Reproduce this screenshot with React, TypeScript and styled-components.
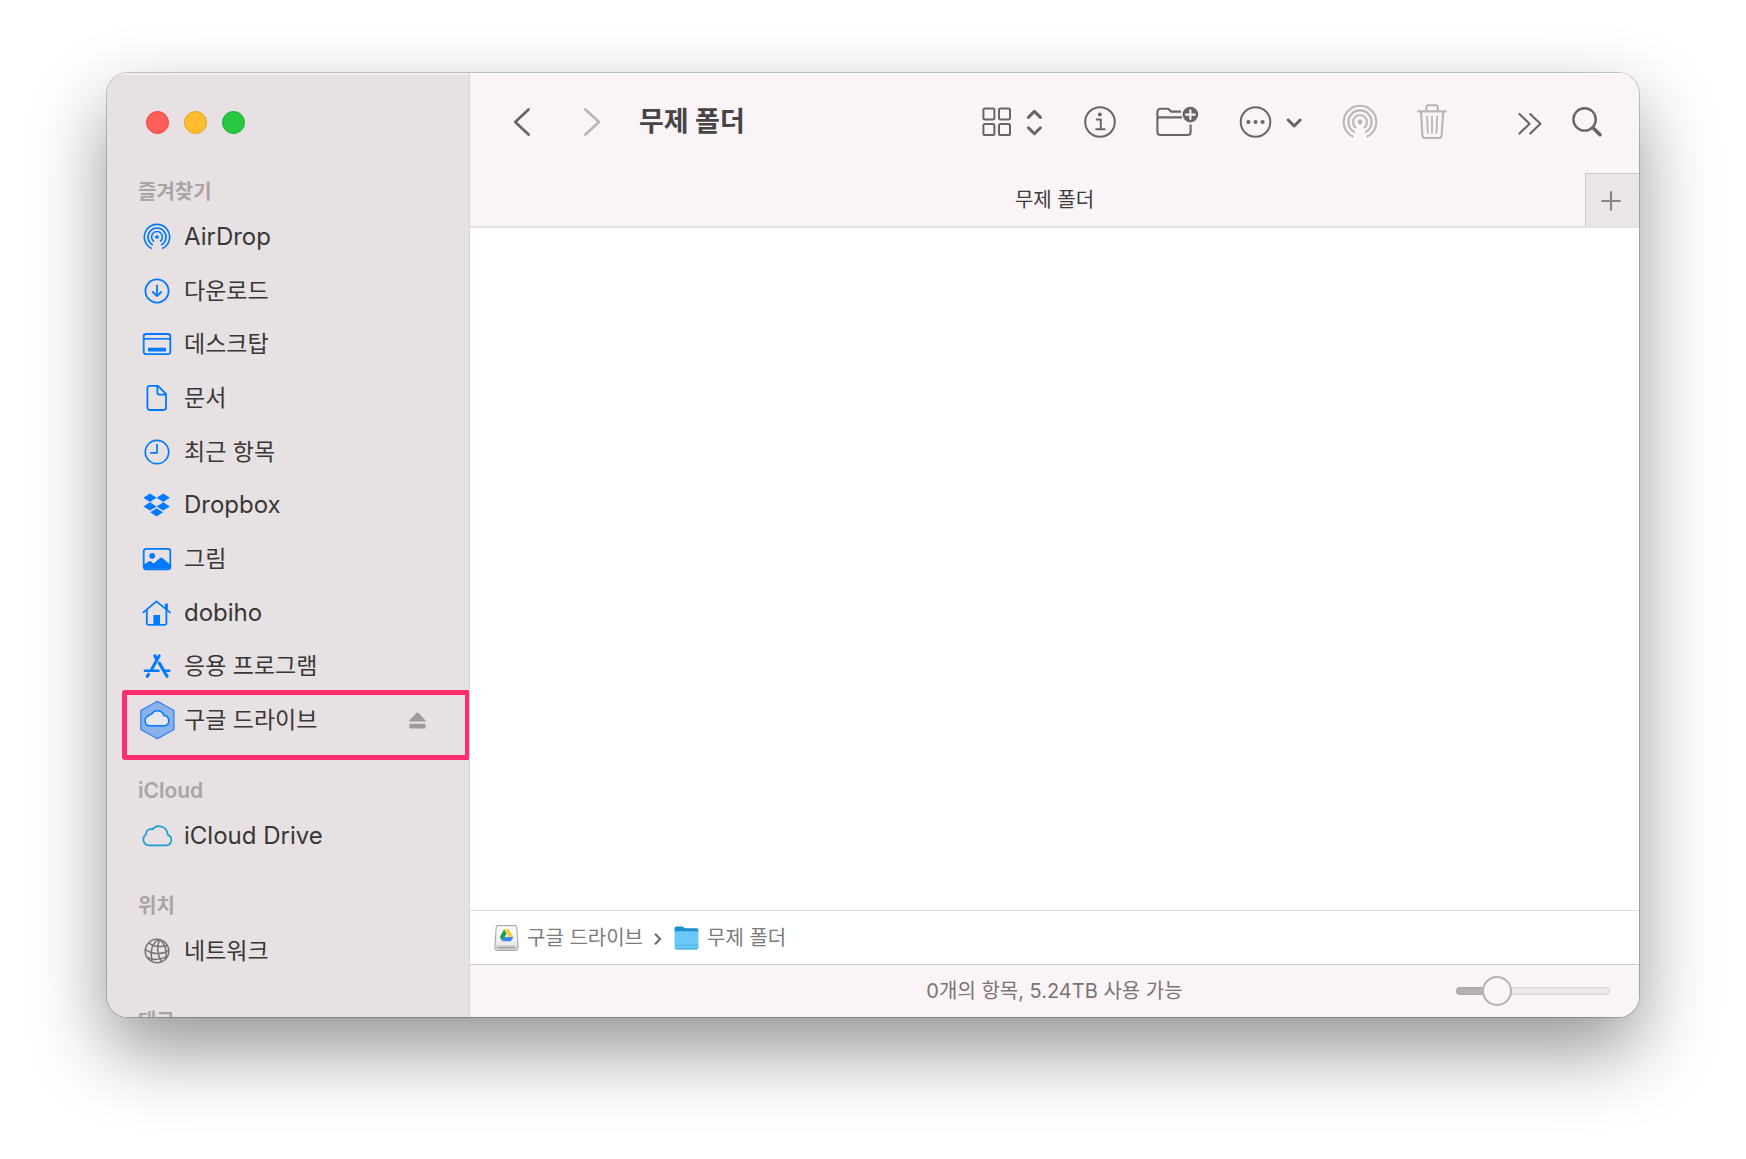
import React, { useState } from "react";
import styled, { createGlobalStyle } from "styled-components";

const BLUE = "#007aff";
const INK = "#6b6466";
const FAINT = "#bcb5b7";

const GlobalStyle = createGlobalStyle`
  *, *::before, *::after { box-sizing: border-box; }
  body {
    margin: 0;
    background: #fff;
    font-family: Inter, "Noto Sans CJK KR", sans-serif;
  }
  button { font: inherit; color: inherit; background: none; border: 0; padding: 0; }
  svg { display: block; flex: none; }
`;

const Page = styled.div`
  min-height: 100vh;
  padding: 73px 107px 142px;
`;

const Window = styled.div`
  display: flex;
  height: calc(100vh - 215px);
  min-height: 480px;
  border-radius: 21px;
  overflow: hidden;
  background: #fff;
  box-shadow: 0 0 0 1px rgba(0, 0, 0, 0.2), 0 33px 76px rgba(0, 0, 0, 0.42);
`;

const Sidebar = styled.aside`
  flex: 0 0 363px;
  overflow: hidden;
  background: #e7e1e3;
  border-right: 1px solid #d9d3d5;
  box-shadow: inset 0 2px 0 #f1edee;
`;

const Lights = styled.div`
  display: flex;
  gap: 15px;
  padding: 38px 0 40px 39px;
`;

const Light = styled.button<{ $fill: string; $edge: string }>`
  width: 23px;
  height: 23px;
  border-radius: 50%;
  background: ${(p) => p.$fill};
  border: 1px solid ${(p) => p.$edge};
`;

const Group = styled.section`
  margin-bottom: 26px;
`;

const GroupTitle = styled.h2<{ $latin: boolean }>`
  margin: 0;
  padding-left: 31px;
  font-size: ${(p) => (p.$latin ? 21 : 20)}px;
  line-height: 36px;
  font-weight: 600;
  color: #aaa3a5;
`;

const List = styled.ul<{ $height?: number }>`
  display: flex;
  flex-direction: column;
  height: ${(p) => (p.$height ? p.$height + "px" : "auto")};
  margin: 0;
  padding: 0;
  list-style: none;
`;

const Item = styled.li`
  position: relative;
  display: flex;
  flex: 1 0 auto;
  min-height: 53px;
  align-items: center;
  padding: 0 43px 0 32px;
`;

const ItemLink = styled.a<{ $latin: boolean }>`
  display: flex;
  flex: 1;
  align-items: center;
  gap: 9px;
  font-size: ${(p) => (p.$latin ? 24 : 23)}px;
  line-height: 32px;
  color: #383637;
  text-decoration: none;
`;

const IconSlot = styled.span`
  display: grid;
  place-items: center;
  width: 36px;
  height: 40px;
`;

const Marker = styled.span`
  position: absolute;
  top: -3px;
  right: -1px;
  bottom: -13px;
  left: 15px;
  border: 5px solid #ff2d6d;
  border-radius: 3px;
  pointer-events: none;
`;

const Main = styled.main`
  display: flex;
  flex: 1;
  min-width: 0;
  flex-direction: column;
`;

const Toolbar = styled.header`
  display: flex;
  flex: 0 0 100px;
  align-items: center;
  padding: 0 37px 2px 38px;
  background: #faf4f6;
  box-shadow: inset 0 2px 0 #fffcfd;
  color: ${INK};
`;

const NavButtons = styled.div`
  display: flex;
  gap: 42px;
`;

const Title = styled.h1`
  margin: 0 auto 0 33px;
  font-size: 27px;
  line-height: 38px;
  font-weight: 700;
  color: #484446;
`;

const Tools = styled.div`
  display: flex;
  gap: 40px;
  margin-right: 71px;
`;

const EndTools = styled.div`
  display: flex;
  gap: 30px;
`;

const ToolButton = styled.button<{ $width: number }>`
  display: flex;
  align-items: center;
  justify-content: space-between;
  width: ${(p) => p.$width}px;
  height: 36px;
`;

const TabBar = styled.div`
  display: grid;
  flex: 0 0 55px;
  grid-template-columns: 54px 1fr 54px;
  background: #faf4f6;
  border-bottom: 2px solid #e6e1e3;
`;

const Tab = styled.button`
  grid-column: 2;
  font-size: 20px;
  line-height: 28px;
  color: #3f3b3d;
`;

const NewTab = styled.button`
  display: grid;
  place-items: center;
  padding: 2px 3px 0 0;
  background: #ece6e8;
  border: solid #cfc9cb;
  border-width: 1px 0 0 1px;
`;

const Files = styled.div`
  flex: 1;
  background: #fff;
`;

const PathBar = styled.nav`
  display: flex;
  flex: 0 0 54px;
  align-items: center;
  gap: 11px;
  padding: 0 24px;
  border-top: 1px solid #e0e0e0;
`;

const PathLink = styled.a`
  display: flex;
  align-items: center;
  gap: 8px;
  font-size: 20px;
  line-height: 28px;
  color: #7b7b7b;
  text-decoration: none;
`;

const StatusBar = styled.footer`
  display: grid;
  flex: 0 0 53px;
  grid-template-columns: 1fr auto 1fr;
  align-items: center;
  padding: 0 29px 1px;
  background: #faf4f6;
  border-top: 1px solid #cfcacc;
`;

const StatusText = styled.p`
  grid-column: 2;
  margin: 0;
  font-size: 20px;
  line-height: 28px;
  color: #7a7375;
`;

const Slider = styled.input<{ $fill: number }>`
  appearance: none;
  justify-self: end;
  width: 154px;
  height: 30px;
  margin: 0;
  background: none;

  &::-webkit-slider-runnable-track {
    height: 8px;
    border-radius: 4px;
    box-shadow: inset 0 0 0 1px rgba(120, 100, 108, 0.14);
    background: linear-gradient(
      to right,
      #b7b0b2 ${(p) => p.$fill}%,
      #ece6e8 ${(p) => p.$fill}%
    );
  }

  &::-webkit-slider-thumb {
    appearance: none;
    width: 30px;
    height: 30px;
    margin-top: -11px;
    border: 2px solid #b7b0b2;
    border-radius: 50%;
    background: #faf4f6;
  }
`;

const arc = (r: number, deg: number) => {
  const a = (deg * Math.PI) / 180;
  const dx = r * Math.sin(a);
  const dy = 18 + r * Math.cos(a);
  return `M${18 - dx} ${dy}A${r} ${r} 0 1 1 ${18 + dx} ${dy}`;
};

const AirDropIcon = ({ size, color, weight }: { size: number; color: string; weight: number }) => (
  <svg width={size} height={size} viewBox="0 0 36 36" fill="none" stroke={color} strokeWidth={weight} strokeLinecap="round">
    <path d={arc(16.3, 27)} />
    <path d={arc(11.6, 31)} />
    <path d={arc(7, 40)} />
    <circle cx="18" cy="18" r="2.4" fill={color} stroke="none" />
  </svg>
);

const DownloadIcon = () => (
  <svg width="28" height="28" viewBox="0 0 28 28" fill="none" stroke={BLUE} strokeWidth="1.8" strokeLinecap="round" strokeLinejoin="round">
    <circle cx="14" cy="14" r="11.6" />
    <path d="M14 8.4V19M9.8 15L14 19.2L18.2 15" />
  </svg>
);

const DesktopIcon = () => (
  <svg width="30" height="24" viewBox="0 0 30 24" fill="none" stroke={BLUE} strokeWidth="1.8">
    <rect x="1.7" y="2" width="26.6" height="20.2" rx="2.4" />
    <path d="M2 6.8H28" strokeWidth="1.6" />
    <rect x="6" y="15.8" width="18" height="3.8" rx="0.8" fill={BLUE} stroke="none" />
  </svg>
);

const DocumentIcon = () => (
  <svg width="24" height="28" viewBox="0 0 24 28" fill="none" stroke={BLUE} strokeWidth="1.8" strokeLinejoin="round">
    <path d="M4.6 1.8H13L21 10V23.6A2.4 2.4 0 0 1 18.6 26H4.8A2.4 2.4 0 0 1 2.4 23.6V4A2.2 2.2 0 0 1 4.6 1.8Z" />
    <path d="M12.4 2.2V8.8A1.8 1.8 0 0 0 14.2 10.6H20.8" />
  </svg>
);

const ClockIcon = () => (
  <svg width="28" height="28" viewBox="0 0 28 28" fill="none" stroke={BLUE} strokeWidth="1.7" strokeLinecap="round" strokeLinejoin="round">
    <circle cx="14" cy="14" r="11.7" />
    <path d="M14 6.6V14.8H7.6" />
  </svg>
);

const DropboxIcon = () => (
  <svg width="28" height="24" viewBox="0 0 28 24" fill={BLUE}>
    <path d="M7 0.6L13.6 4.8L7 9L0.4 4.8ZM20.2 0.6L26.8 4.8L20.2 9L13.6 4.8ZM7 9.2L13.6 13.4L7 17.6L0.4 13.4ZM20.2 9.2L26.8 13.4L20.2 17.6L13.6 13.4ZM13.6 15.2L20 19.2L13.6 23.4L7.2 19.2Z" />
  </svg>
);

const PictureIcon = () => (
  <svg width="30" height="24" viewBox="0 0 30 24">
    <rect x="1.7" y="1.9" width="26.6" height="20.4" rx="2.4" fill="none" stroke={BLUE} strokeWidth="1.8" />
    <circle cx="10.2" cy="8.8" r="2.9" fill={BLUE} />
    <path d="M2 17.6L7.2 14.2Q8 13.7 8.8 14.3L11.6 16.4L18.4 10.8Q19.3 10.1 20.2 10.8L28 17.6V21.8H2Z" fill={BLUE} />
  </svg>
);

const HomeIcon = () => (
  <svg width="30" height="28" viewBox="0 0 30 28" fill="none" stroke={BLUE} strokeWidth="1.8" strokeLinecap="round" strokeLinejoin="round">
    <path d="M1.4 13.4L14.4 2.4L28 13.4" />
    <path d="M4.8 11V24A1.8 1.8 0 0 0 6.6 25.8H22.6A1.8 1.8 0 0 0 24.4 24V11" />
    <path d="M24.4 4.6V10" strokeWidth="3" strokeLinecap="butt" />
    <rect x="11.4" y="16" width="6.6" height="9.6" fill={BLUE} stroke="none" />
  </svg>
);

const AppsIcon = () => (
  <svg width="28" height="28" viewBox="0 0 28 28" fill="none" stroke={BLUE} strokeLinecap="round">
    <path d="M16.2 3.8L8.6 17.4M5.6 22.2L4.2 24.4" strokeWidth="3" />
    <path d="M11.8 3.8L13.4 6.6M16.4 11.2L24 24.2" strokeWidth="3.2" />
    <path d="M1.8 18.8H15.6M22 18.8H26.2" strokeWidth="2.4" />
  </svg>
);

const GoogleDriveIcon = () => (
  <svg width="36" height="40" viewBox="0 0 36 40" strokeLinejoin="round">
    <path d="M18.4 1.2L35 10.6V29.4L18.4 38.8L1.8 29.4V10.6Z" fill="#8ab1ea" stroke="#2a83f2" strokeWidth="1.2" />
    <path d="M10.6 25.8A5 5 0 0 1 8.8 16.4A4.4 4.4 0 0 1 12.6 14.2A6.6 6.6 0 0 1 24.8 15.6A5.2 5.2 0 0 1 26 25.8Z" fill="#e9e7ee" stroke={BLUE} strokeWidth="1.5" />
  </svg>
);

const CloudIcon = () => (
  <svg width="32" height="24" viewBox="0 0 32 24" fill="none" stroke="#1b9fd8" strokeWidth="1.7" strokeLinejoin="round">
    <path d="M7.4 21.4A6 6 0 0 1 5.2 10.4A4.6 4.6 0 0 1 11.4 5.4A8.6 8.6 0 0 1 26.6 10.6A5.6 5.6 0 0 1 25.2 21.4Z" />
  </svg>
);

const GlobeIcon = () => (
  <svg width="28" height="28" viewBox="0 0 28 28" fill="none" stroke="#777274" strokeWidth="1.5">
    <circle cx="14" cy="14" r="11.8" />
    <path d="M16.6 2.6C9 5 6.8 14 9.2 24.6M16.6 2.6C13.6 9 14 18 18.6 24.8M16.6 2.6C21.6 6 24.2 12 23 21.4" />
    <path d="M5.6 5.8C11 9.6 18 10.2 24.4 8.6M2.4 12.4C9 17.6 18.6 17.8 25.6 13.6M4.2 20.6C10 23 18 22.6 24 19.6" />
  </svg>
);

const EjectIcon = () => (
  <svg width="17" height="17" viewBox="0 0 17 17" fill="#9f999b">
    <path d="M7.7 0.8Q8.5 0 9.3 0.8L16.4 8.2Q17 9.4 15.8 9.6H1.2Q0 9.4 0.6 8.2Z" />
    <rect x="0.4" y="11.8" width="16.2" height="4.8" rx="1" />
  </svg>
);

const Chevron = ({ flip, color }: { flip?: boolean; color: string }) => (
  <svg width="28" height="32" viewBox="0 0 28 32" fill="none" stroke={color} strokeWidth="2.7" strokeLinecap="round" strokeLinejoin="round">
    <path d={flip ? "M7.4 3.4L21 16L7.4 28.6" : "M20.6 3.4L7.2 16L20.6 28.6"} />
  </svg>
);

const GridIcon = () => (
  <svg width="30" height="30" viewBox="0 0 30 30" fill="none" stroke={INK} strokeWidth="2">
    <rect x="1.4" y="1.4" width="11" height="11" rx="1.6" />
    <rect x="17" y="1.4" width="11" height="11" rx="1.6" />
    <rect x="1.4" y="17" width="11" height="11" rx="1.6" />
    <rect x="17" y="17" width="11" height="11" rx="1.6" />
  </svg>
);

const UpDownIcon = () => (
  <svg width="18" height="28" viewBox="0 0 18 28" fill="none" stroke={INK} strokeWidth="3" strokeLinecap="round" strokeLinejoin="round">
    <path d="M2.4 9.4L8.4 3.4L14.4 9.4M2.4 19.8L8.4 25.8L14.4 19.8" />
  </svg>
);

const InfoIcon = () => (
  <svg width="32" height="32" viewBox="0 0 32 32" fill="none" stroke={INK} strokeWidth="2">
    <circle cx="16" cy="16" r="14.8" />
    <circle cx="15.8" cy="8.6" r="2" fill={INK} stroke="none" />
    <path d="M12.8 13.4H16.8V23.2M12.2 23.2H20.6" strokeLinecap="round" strokeLinejoin="round" />
  </svg>
);

const NewFolderIcon = () => (
  <svg width="43" height="32" viewBox="0 0 43 32" fill="none" stroke={INK} strokeWidth="2.1">
    <path d="M25 5.6H15.2L12.2 2.8H4.4A3 3 0 0 0 1.4 5.8V26A3 3 0 0 0 4.4 29H31.6A3 3 0 0 0 34.6 26V18.4M1.6 11.4H26" />
    <circle cx="34.4" cy="8.6" r="7.8" fill={INK} stroke="none" />
    <path d="M34.4 4.2V13M30 8.6H38.8" stroke="#faf4f6" strokeLinecap="round" />
  </svg>
);

const MoreIcon = () => (
  <svg width="33" height="32" viewBox="0 0 33 32" fill={INK}>
    <circle cx="16.5" cy="16" r="14.8" fill="none" stroke={INK} strokeWidth="2" />
    <circle cx="9.4" cy="16" r="2.1" />
    <circle cx="16.5" cy="16" r="2.1" />
    <circle cx="23.6" cy="16" r="2.1" />
  </svg>
);

const DownIcon = () => (
  <svg width="17" height="14" viewBox="0 0 17 14" fill="none" stroke={INK} strokeWidth="3" strokeLinecap="round" strokeLinejoin="round">
    <path d="M3.2 5L9.2 11L15.2 5" />
  </svg>
);

const TrashIcon = () => (
  <svg width="30" height="36" viewBox="0 0 30 36" fill="none" stroke={FAINT} strokeWidth="2.1" strokeLinecap="round" strokeLinejoin="round">
    <path d="M1.2 7.4H28.8M9.4 7V3.4A2.2 2.2 0 0 1 11.6 1.2H18.6A2.2 2.2 0 0 1 20.8 3.4V7" />
    <path d="M4 7.8L5.4 31.4A3 3 0 0 0 8.4 34H21.6A3 3 0 0 0 24.6 31.4L26.2 7.8" />
    <path d="M10 12.4L10.8 29M15 12.4V29M20.2 12.4L19.4 29" strokeWidth="1.8" />
  </svg>
);

const OverflowIcon = () => (
  <svg width="24" height="28" viewBox="0 0 24 28" fill="none" stroke={INK} strokeWidth="2.1" strokeLinecap="round" strokeLinejoin="round">
    <path d="M1.4 6L11.6 15.8L1.4 25.6M12.2 6L22.4 15.8L12.2 25.6" />
  </svg>
);

const SearchIcon = () => (
  <svg width="30" height="30" viewBox="0 0 30 30" fill="none" stroke={INK} strokeLinecap="round">
    <circle cx="12.6" cy="12.4" r="11.2" strokeWidth="2.4" />
    <path d="M21 20.8L28 27.8" strokeWidth="3.6" />
  </svg>
);

const PlusIcon = () => (
  <svg width="20" height="20" viewBox="0 0 20 20" stroke="#8a8586" strokeWidth="2.2" strokeLinecap="round">
    <path d="M10 1.2V18.8M1.2 10H18.8" />
  </svg>
);

const DriveIcon = () => (
  <svg width="25" height="28" viewBox="0 0 25 28">
    <defs>
      <linearGradient id="disk" x1="0" y1="0" x2="0" y2="1">
        <stop offset="0" stopColor="#ffffff" />
        <stop offset="1" stopColor="#e4e4e4" />
      </linearGradient>
    </defs>
    <path d="M4 1.6H21Q22.6 1.6 22.8 3.2L24 21V24A2.4 2.4 0 0 1 21.6 26.4H3.4A2.4 2.4 0 0 1 1 24V21L2.2 3.2Q2.4 1.6 4 1.6Z" fill="url(#disk)" stroke="#a9a9a9" strokeWidth="1.1" />
    <path d="M1.6 21.2H23.4V24A2 2 0 0 1 21.4 26H3.6A2 2 0 0 1 1.6 24Z" fill="#cfcfcf" />
    <path d="M4 23.6H21" stroke="#a3a3a3" strokeWidth="1.4" />
    <path d="M10.2 5.2L12.6 9.4L8.4 17.2L5.8 13Z" fill="#17a05c" />
    <path d="M10.2 5.2H15L19.4 13H14.6Z" fill="#ffcd3a" />
    <path d="M10.6 13H19.4L17 17.2H8.4Z" fill="#3f82f2" />
  </svg>
);

const FolderIcon = () => (
  <svg width="25" height="26" viewBox="0 0 25 26">
    <path d="M0.6 3.4Q0.6 1.6 2.4 1.6H8.6L11.2 3.2H22.6Q24.4 3.2 24.4 5V8H0.6Z" fill="#1a8fd2" />
    <path d="M0.6 6.2H24.4V22Q24.4 24.2 22.2 24.2H2.8Q0.6 24.2 0.6 22Z" fill="#69c8f7" />
    <path d="M0.8 20.2H24.2" stroke="#4db2e6" strokeWidth="1" />
    <path d="M0.8 22.4Q1 24 2.8 24H22.2Q24 24 24.2 22.4" fill="none" stroke="#3d9fd3" strokeWidth="1" />
  </svg>
);

const PathArrow = () => (
  <svg width="9" height="14" viewBox="0 0 9 14" fill="none" stroke="#6f6f6f" strokeWidth="2.2" strokeLinejoin="round">
    <path d="M1 2.8L6.2 8L1 13.2" />
  </svg>
);

const favourites = [
  { label: "AirDrop", icon: <AirDropIcon size={28} color={BLUE} weight={2.1} /> },
  { label: "다운로드", icon: <DownloadIcon /> },
  { label: "데스크탑", icon: <DesktopIcon /> },
  { label: "문서", icon: <DocumentIcon /> },
  { label: "최근 항목", icon: <ClockIcon /> },
  { label: "Dropbox", icon: <DropboxIcon /> },
  { label: "그림", icon: <PictureIcon /> },
  { label: "dobiho", icon: <HomeIcon /> },
  { label: "응용 프로그램", icon: <AppsIcon /> },
  { label: "구글 드라이브", icon: <GoogleDriveIcon />, ejectable: true },
];

const groups = [
  { title: "즐겨찾기", height: 537, items: favourites },
  { title: "iCloud", height: 53, items: [{ label: "iCloud Drive", icon: <CloudIcon /> }] },
  { title: "위치", height: 53, items: [{ label: "네트워크", icon: <GlobeIcon /> }] },
  { title: "태그", items: [] },
] as {
  title: string;
  height?: number;
  items: { label: string; icon: React.ReactNode; ejectable?: boolean }[];
}[];

const isLatin = (text: string) => /^[A-Za-z ]+$/.test(text);

export default function App() {
  const [zoom, setZoom] = useState(21);

  return (
    <Page>
      <GlobalStyle />
      <Window>
        <Sidebar>
          <Lights>
            <Light $fill="#ff5f57" $edge="#e9463f" aria-label="닫기" />
            <Light $fill="#febc2e" $edge="#e5a31c" aria-label="최소화" />
            <Light $fill="#28c840" $edge="#1bb031" aria-label="확대" />
          </Lights>
          {groups.map((group) => (
            <Group key={group.title}>
              <GroupTitle $latin={isLatin(group.title)}>{group.title}</GroupTitle>
              <List $height={group.height}>
                {group.items.map((item) => (
                  <Item key={item.label}>
                    <ItemLink href="#" $latin={isLatin(item.label)}>
                      <IconSlot>{item.icon}</IconSlot>
                      {item.label}
                    </ItemLink>
                    {item.ejectable && (
                      <>
                        <button aria-label="추출">
                          <EjectIcon />
                        </button>
                        <Marker />
                      </>
                    )}
                  </Item>
                ))}
              </List>
            </Group>
          ))}
        </Sidebar>
        <Main>
          <Toolbar>
            <NavButtons>
              <ToolButton $width={28} aria-label="뒤로">
                <Chevron color={INK} />
              </ToolButton>
              <ToolButton $width={28} aria-label="앞으로">
                <Chevron flip color={FAINT} />
              </ToolButton>
            </NavButtons>
            <Title>무제 폴더</Title>
            <Tools>
              <ToolButton $width={62} aria-label="보기">
                <GridIcon />
                <UpDownIcon />
              </ToolButton>
              <ToolButton $width={32} aria-label="정보">
                <InfoIcon />
              </ToolButton>
              <ToolButton $width={43} aria-label="새로운 폴더">
                <NewFolderIcon />
              </ToolButton>
              <ToolButton $width={63} aria-label="동작">
                <MoreIcon />
                <DownIcon />
              </ToolButton>
              <ToolButton $width={35} aria-label="AirDrop">
                <AirDropIcon size={36} color={FAINT} weight={2.1} />
              </ToolButton>
              <ToolButton $width={30} aria-label="삭제">
                <TrashIcon />
              </ToolButton>
            </Tools>
            <EndTools>
              <ToolButton $width={24} aria-label="더 보기">
                <OverflowIcon />
              </ToolButton>
              <ToolButton $width={30} aria-label="검색">
                <SearchIcon />
              </ToolButton>
            </EndTools>
          </Toolbar>
          <TabBar>
            <Tab>무제 폴더</Tab>
            <NewTab aria-label="새로운 탭">
              <PlusIcon />
            </NewTab>
          </TabBar>
          <Files />
          <PathBar>
            <PathLink href="#">
              <DriveIcon />
              구글 드라이브
            </PathLink>
            <PathArrow />
            <PathLink href="#">
              <FolderIcon />
              무제 폴더
            </PathLink>
          </PathBar>
          <StatusBar>
            <StatusText>0개의 항목, 5.24TB 사용 가능</StatusText>
            <Slider
              type="range"
              min={0}
              max={100}
              value={zoom}
              $fill={zoom + 5}
              aria-label="아이콘 크기"
              onChange={(e) => setZoom(Number(e.target.value))}
            />
          </StatusBar>
        </Main>
      </Window>
    </Page>
  );
}
